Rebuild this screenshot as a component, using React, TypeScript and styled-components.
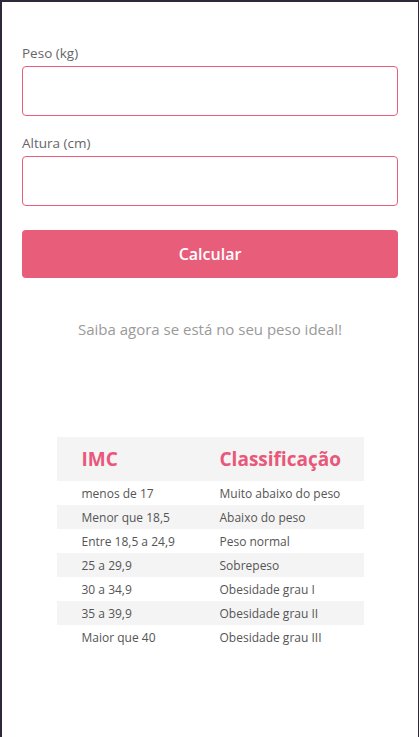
import styled, { createGlobalStyle } from 'styled-components';

const GlobalStyle = createGlobalStyle`
  * {
    box-sizing: border-box;
  }

  body {
    margin: 0;
    background: #ffffff;
    font-family: 'Open Sans', 'Noto Sans', sans-serif;
  }
`;

// Tabela de classificação do IMC
const IMC_ROWS = [
  { range: 'menos de 17', label: 'Muito abaixo do peso' },
  { range: 'Menor que 18,5', label: 'Abaixo do peso' },
  { range: 'Entre 18,5 a 24,9', label: 'Peso normal' },
  { range: '25 a 29,9', label: 'Sobrepeso' },
  { range: '30 a 34,9', label: 'Obesidade grau I' },
  { range: '35 a 39,9', label: 'Obesidade grau II' },
  { range: 'Maior que 40', label: 'Obesidade grau III' },
];

const Page = styled.main`
  min-height: 100vh;
  padding: 42px 20px 40px;
  border-top: 2px solid #2e2838;
  border-left: 2px solid #2e2838;
  border-right: 1px solid #2e2838;
  background-color: #ffffff;
`;

const Form = styled.form`
  display: flex;
  flex-direction: column;
`;

const Field = styled.div`
  display: flex;
  flex-direction: column;
  margin-bottom: 18px;
`;

const Label = styled.label`
  margin-bottom: 4px;
  font-size: 13.5px;
  line-height: 18px;
  color: #666666;
`;

const Input = styled.input`
  height: 50px;
  padding: 0 12px;
  border: 1px solid #e85d7a;
  border-radius: 4px;
  font-family: inherit;
  font-size: 16px;
  outline: none;
`;

const Button = styled.button`
  height: 48px;
  margin-top: 6px;
  border: none;
  border-radius: 4px;
  background-color: #e85d7a;
  color: #ffffff;
  font-family: inherit;
  font-size: 16px;
  font-weight: 600;
  cursor: pointer;
`;

const Message = styled.p`
  margin: 40px 0 0;
  text-align: center;
  font-size: 15px;
  line-height: 22px;
  color: #9a9a9a;
`;

const Table = styled.table`
  width: 307px;
  margin: 97px auto 0;
  border-collapse: collapse;
  table-layout: fixed;
`;

const HeadCell = styled.th<{ width: number }>`
  width: ${(props) => props.width}px;
  height: 44px;
  padding: 0 0 0 25px;
  background-color: #f4f4f4;
  text-align: left;
  font-size: 19px;
  font-weight: 700;
  color: #e9577a;
`;

const Row = styled.tr<{ striped: boolean }>`
  background-color: ${(props) => (props.striped ? '#f4f4f4' : '#ffffff')};
`;

const Cell = styled.td`
  height: 24px;
  padding: 0 0 0 25px;
  font-size: 12px;
  color: #555555;
  white-space: nowrap;
`;

const App = () => {
  return (
    <>
      <GlobalStyle />
      <Page>
        {/* Formulário de cálculo */}
        <Form onSubmit={(e) => e.preventDefault()}>
          <Field>
            <Label htmlFor="peso">Peso (kg)</Label>
            <Input id="peso" type="number" />
          </Field>
          <Field>
            <Label htmlFor="altura">Altura (cm)</Label>
            <Input id="altura" type="number" />
          </Field>
          <Button type="submit">Calcular</Button>
        </Form>

        <Message>Saiba agora se está no seu peso ideal!</Message>

        {/* Tabela de referência */}
        <Table>
          <thead>
            <tr>
              <HeadCell width={138}>IMC</HeadCell>
              <HeadCell width={169}>Classificação</HeadCell>
            </tr>
          </thead>
          <tbody>
            {IMC_ROWS.map((row, index) => (
              <Row key={row.range} striped={index % 2 === 1}>
                <Cell>{row.range}</Cell>
                <Cell>{row.label}</Cell>
              </Row>
            ))}
          </tbody>
        </Table>
      </Page>
    </>
  );
};

export default App;
